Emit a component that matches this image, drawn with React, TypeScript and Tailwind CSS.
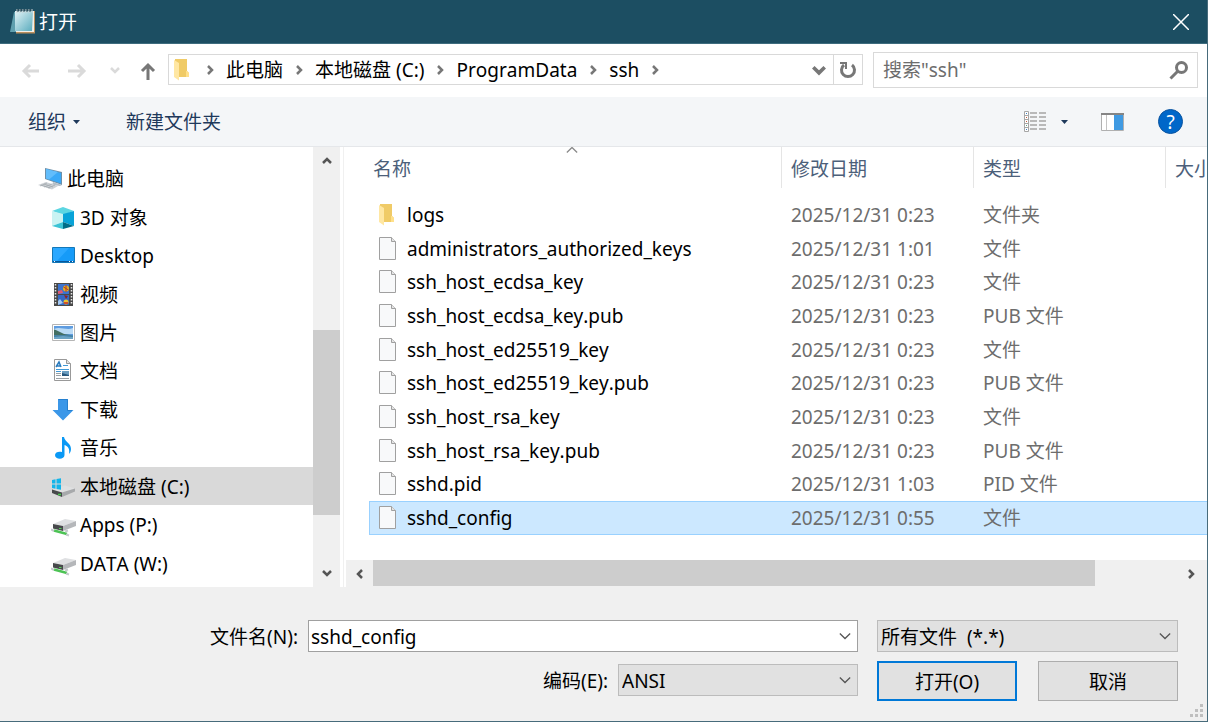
import React, { useState } from 'react';

interface FileEntry {
  name: string;
  modified: string;
  kind: string;
  folder?: boolean;
}

interface Place {
  name: string;
  icon: React.ReactNode;
  root?: boolean;
}

const FILES: FileEntry[] = [
  { name: 'logs', modified: '2025/12/31 0:23', kind: '文件夹', folder: true },
  { name: 'administrators_authorized_keys', modified: '2025/12/31 1:01', kind: '文件' },
  { name: 'ssh_host_ecdsa_key', modified: '2025/12/31 0:23', kind: '文件' },
  { name: 'ssh_host_ecdsa_key.pub', modified: '2025/12/31 0:23', kind: 'PUB 文件' },
  { name: 'ssh_host_ed25519_key', modified: '2025/12/31 0:23', kind: '文件' },
  { name: 'ssh_host_ed25519_key.pub', modified: '2025/12/31 0:23', kind: 'PUB 文件' },
  { name: 'ssh_host_rsa_key', modified: '2025/12/31 0:23', kind: '文件' },
  { name: 'ssh_host_rsa_key.pub', modified: '2025/12/31 0:23', kind: 'PUB 文件' },
  { name: 'sshd.pid', modified: '2025/12/31 1:03', kind: 'PID 文件' },
  { name: 'sshd_config', modified: '2025/12/31 0:55', kind: '文件' },
];

const CRUMBS = ['此电脑', '本地磁盘 (C:)', 'ProgramData', 'ssh'];

const NotepadIcon = () => (
  <svg width="26" height="28" viewBox="0 0 26 28">
    <defs>
      <linearGradient id="pad" x1="0" y1="0" x2="1" y2="1">
        <stop offset="0" stopColor="#e4f4f7" />
        <stop offset="1" stopColor="#58abbd" />
      </linearGradient>
    </defs>
    <path d="M4 4 0 24h7V4z" fill="#5f9fae" />
    <path d="M6 24h17.500V3H25v22.500H6z" fill="#b98e5c" />
    <path d="M22 3h2v21H6v-2h16z" fill="#f2efe8" />
    <path d="M5 3h18l-1 20H5z" fill="url(#pad)" />
    <path d="M7 1v4M10 1v4M13 1v4M16 1v4M19 1v4M22 1v4" stroke="#c9d2d5" />
    <path d="M8 1v3M11 1v3M14 1v3M17 1v3M20 1v3" stroke="#38535d" />
  </svg>
);

const FolderIcon = () => (
  <svg width="16" height="22" viewBox="0 0 16 22">
    <path d="M1 0h12v12l2 2v4H1z" fill="#f0cb67" />
    <path d="M12 12h1l2 2v4h-3z" fill="#ffe08a" />
    <path d="M0 1 5 4v17.500L0 18z" fill="#ffe7a3" />
  </svg>
);

const FileIcon = () => (
  <svg width="18" height="24" viewBox="0 0 18 24">
    <path d="M.5.5h12l4 4v18H.5z" fill="#f8f9fa" stroke="#a0a0a0" />
    <path d="M12.500.5v4h4" fill="#e4e4e4" stroke="#a0a0a0" />
  </svg>
);

const ComputerIcon = () => (
  <svg width="26" height="24" viewBox="0 0 26 24">
    <path d="m7 1 17 4v13L7 12z" fill="#6d8fa8" />
    <path d="m8 2 15 4v10.500L8 11.500z" fill="#3ba9f7" />
    <path d="m8 2 12 3-9 7.500-3-1z" fill="#62bdfb" />
    <path d="m15 15-1 3 8 1 2-1z" fill="#b5bec6" />
    <path d="m0 18 8-3 12 4-6 3.500z" fill="#cdd1d5" />
    <path d="m3 18 9 3M6 17l9 3M2 19l7-3M6 20l8-3M10 21l7-3" stroke="#a1a8ae" strokeWidth=".7" />
  </svg>
);

const CubeIcon = () => (
  <svg width="24" height="24" viewBox="0 0 24 24">
    <path d="m12 1 11 4-11 4L1 5z" fill="#5cd6e2" />
    <path d="M1 5 12 8v8L1 20z" fill="#c9f3f3" />
    <path d="M23 5 12 8v8l11 4z" fill="#08a3d8" />
    <path d="M1 20l11-4v7z" fill="#3cc3d5" />
    <path d="M23 20l-11-4v7z" fill="#006d88" />
  </svg>
);

const DesktopIcon = () => (
  <svg width="24" height="24" viewBox="0 0 24 24">
    <path d="M1.500 3.500h22v15h-22z" fill="#169bf8" stroke="#1478b8" />
    <path d="M2 4h16L6 17H2z" fill="#2ba8ff" />
    <path d="M2 17.500h21" stroke="#08579b" />
    <path d="M3 17.500h1M18 17.500h1M21 17.500h1" stroke="#fff" />
  </svg>
);

const VideoIcon = () => (
  <svg width="24" height="24" viewBox="0 0 24 24">
    <path d="M3 0h19v23H3z" fill="#484848" />
    <path d="M7 1h11v10H7z" fill="#3d74ce" />
    <path d="M7 12h11v10H7z" fill="#3568c4" />
    <path d="M4.500 1v21M20.500 1v21" stroke="#e6e6e6" strokeWidth="1.500" strokeDasharray="1.500 1.500" />
    <path d="M7 8l4-1 1 3-5 1z" fill="#e05a73" />
    <circle cx="15" cy="5.500" r="3" fill="#e2b022" />
    <path d="M15 2v7M12.500 4l5 3" stroke="#b8372a" />
    <path d="m13 12 2 4 2-3z" fill="#8d2323" />
    <circle cx="15" cy="19" r="2.500" fill="#efc32c" />
    <path d="M13 19h4v2h-4z" fill="#d0502c" />
    <path d="M7 18l2-2 3 4-5 2z" fill="#a6c9ef" />
  </svg>
);

const PictureIcon = () => (
  <svg width="24" height="24" viewBox="0 0 24 24">
    <path d="M1.500 3.500h22v16h-22z" fill="#fff" stroke="#b5b5b5" />
    <path d="M3 5h19v13H3z" fill="#5e9ce0" />
    <path d="M3 8c6-3 13 2 19-1v6H3z" fill="#b9daf5" />
    <path d="M3 8.500c5 1 8 4.500 13 5l6 1H3z" fill="#436f63" />
    <path d="M3 14.500h19V18H3z" fill="#3f7fa5" />
    <path d="m3 16 9-1 10 1v2H3z" fill="#6ba3c4" />
  </svg>
);

const DocumentIcon = () => (
  <svg width="24" height="24" viewBox="0 0 24 24">
    <path d="M3.500.5h12l4 4v17h-16z" fill="#fff" stroke="#999" />
    <path d="M15.500.5v4h4" fill="#e2e2e2" stroke="#999" />
    <path d="m5 8 3-5 2 5M6 7h3" stroke="#2a7bbd" strokeWidth="1.500" fill="none" />
    <path d="M12 6.500h5M5 10.500h13M5 12.500h5" stroke="#4099d7" />
    <path d="M11 12h7v5h-7z" fill="#6a9dc0" />
    <path d="m11 14 7 2v1h-7z" fill="#28577d" />
    <path d="M5 14.500h5M5 16.500h5M5 19.500h13" stroke="#9aa0a5" />
  </svg>
);

const DownloadIcon = () => (
  <svg width="24" height="24" viewBox="0 0 24 24">
    <path d="M7 1h10v11h5.500L12 22.500 1.500 12H7z" fill="#3b97e8" />
    <path d="M7.500 1.500h9v11h4.500" fill="none" stroke="#2680cf" />
  </svg>
);

const MusicIcon = () => (
  <svg width="24" height="24" viewBox="0 0 24 24">
    <path
      d="M11 1h2c1 5 7 6 7 12 0 2-1 4-2 5 1-5-1-8-4.500-9v10c0 5-9.500 5-9.500 0 0-3 4-4 7-3z"
      fill="#0a99f5"
    />
  </svg>
);

const SystemDriveIcon = () => (
  <svg width="24" height="24" viewBox="0 0 24 24">
    <path d="m1 14.500 13-4 10 3-13 4z" fill="#dfe0e1" />
    <path d="m1 14.500 10 3V22L1 18z" fill="#47494b" />
    <path d="m11 17.500 13-4v3L11 22z" fill="#a7a9ab" />
    <path d="M7 19.500h3" stroke="#49d14c" strokeWidth="1.500" />
    <path d="m1 5 3.500-.7v4.200H1zM5.500 4l4.500-.8v5.300H5.500zM1 9.500h3.500v4.200L1 13zM5.500 9.500H10v5.300L5.500 14z" fill="#13b5ea" />
  </svg>
);

const NetworkDriveIcon = () => (
  <svg width="26" height="24" viewBox="0 0 26 24">
    <path d="m2 11 12-5 11 2-13 5z" fill="#dfe0e2" />
    <path d="m2 11 10 2v5L2 15.500z" fill="#47494b" />
    <path d="m12 13 13-5v5l-13 5z" fill="#b5b7ba" />
    <path d="M8 15.500h2.500" stroke="#55d158" />
    <path d="m3 17.500 13 3.500" fill="none" stroke="#4cc354" strokeWidth="2.500" />
    <path d="m0 16.500 3 1.500M15 21.500l3 1M14 18.500l3-1" stroke="#c5c9cc" strokeWidth="2" />
  </svg>
);

const PLACES: Place[] = [
  { name: '此电脑', icon: <ComputerIcon />, root: true },
  { name: '3D 对象', icon: <CubeIcon /> },
  { name: 'Desktop', icon: <DesktopIcon /> },
  { name: '视频', icon: <VideoIcon /> },
  { name: '图片', icon: <PictureIcon /> },
  { name: '文档', icon: <DocumentIcon /> },
  { name: '下载', icon: <DownloadIcon /> },
  { name: '音乐', icon: <MusicIcon /> },
  { name: '本地磁盘 (C:)', icon: <SystemDriveIcon /> },
  { name: 'Apps (P:)', icon: <NetworkDriveIcon /> },
  { name: 'DATA (W:)', icon: <NetworkDriveIcon /> },
];

const CHEVRONS = {
  up: 'm3 9 4-4 4 4',
  down: 'm3 5 4 4 4-4',
  left: 'm9 3-4 4 4 4',
  right: 'm5 3 4 4-4 4',
};

interface ChevronProps {
  dir: keyof typeof CHEVRONS;
  size?: number;
  weight?: number;
}

const Chevron: React.FC<ChevronProps> = ({ dir, size = 14, weight = 2.5 }) => (
  <svg width={size} height={size} viewBox="0 0 14 14" fill="none" stroke="currentColor" strokeWidth={weight}>
    <path d={CHEVRONS[dir]} />
  </svg>
);

const NavArrow: React.FC<{ d: string }> = ({ d }) => (
  <svg width="20" height="20" viewBox="0 0 20 20" fill="none" stroke="currentColor" strokeWidth="3">
    <path d={d} />
  </svg>
);

const ViewIcon = () => (
  <svg width="24" height="22" viewBox="0 0 24 22">
    <path d="M1.500.5h4v20h-4zM1.500 4.500h4M1.500 8.500h4M1.500 12.500h4M1.500 16.500h4" fill="#fff" stroke="#a6a6a6" />
    <path d="M7 2h7M16 2h7M7 6h7M16 6h7M7 10h7M16 10h7M7 14h7M16 14h7M7 18h7M16 18h7" stroke="#b9b9b9" strokeWidth="2" />
    <path d="M3 2.500h1M3 18.500h1" stroke="#3d7fc4" />
    <path d="M3 6.500h1M3 10.500h1" stroke="#c65a3a" />
    <path d="M3 14.500h1" stroke="#5b9e80" />
  </svg>
);

const PreviewPaneIcon = () => (
  <svg width="24" height="18" viewBox="0 0 24 18">
    <path d="M.5.5h22v17H.5z" fill="#fff" stroke="#b0b0b0" />
    <path d="M0 1h23" stroke="#858585" strokeWidth="2" />
    <path d="M5.500 2v15" stroke="#c4c4c4" />
    <path d="M13 2h9v15h-9z" fill="#409ae2" />
  </svg>
);

const Caret = () => (
  <svg width="7" height="4" viewBox="0 0 7 4">
    <path d="M0 0h7L3.500 4z" fill="#1e395b" />
  </svg>
);

interface ComboProps {
  id: string;
  label?: string;
  options: string[];
  className?: string;
}

const Combo: React.FC<ComboProps> = ({ id, label, options, className = '' }) => (
  <div className={`relative h-8 ${className}`}>
    <select
      id={id}
      aria-label={label}
      className="block h-full w-full appearance-none border border-[#bcbcbc] bg-[#e1e1e1] pt-[2px] pr-8 pl-[3px] leading-7 text-black outline-none"
    >
      {options.map((option) => (
        <option key={option}>{option}</option>
      ))}
    </select>
    <span className="pointer-events-none absolute inset-y-0 right-[4px] flex items-center text-[#555]">
      <Chevron dir="down" size={18} weight={1} />
    </span>
  </div>
);

const App: React.FC = () => {
  const [place, setPlace] = useState('本地磁盘 (C:)');
  const [fileName, setFileName] = useState('sshd_config');

  return (
    <div className="flex min-h-screen flex-col border-r border-b border-[#476b7b] bg-[#f0f0f0] font-['Noto_Sans','Noto_Sans_CJK_SC',sans-serif] text-[19px] leading-6 text-black [font-kerning:none]">
      <header className="flex h-11 items-center border-b border-[#3e6c7e] bg-[#1c4e62] pl-[10px] text-white">
        <NotepadIcon />
        <h1 className="ml-[3px] flex-1">打开</h1>
        <button type="button" aria-label="关闭" className="flex h-full w-13 items-center justify-center">
          <svg width="16" height="16" viewBox="0 0 16 16" stroke="currentColor" strokeWidth="1.500">
            <path d="m0 0 16 16M16 0 0 16" />
          </svg>
        </button>
      </header>

      <nav className="flex h-[53px] items-center bg-white pr-[9px] pb-[2px] pl-5">
        <button type="button" aria-label="后退" className="text-[#dadada]">
          <NavArrow d="M19 11H4M10 5l-6 6 6 6" />
        </button>
        <button type="button" aria-label="前进" className="ml-[27px] text-[#dadada]">
          <NavArrow d="M1 11h16M11 5l6 6-6 6" />
        </button>
        <button type="button" aria-label="最近浏览的位置" className="ml-[21px] text-[#dadada]">
          <Chevron dir="down" />
        </button>
        <button type="button" aria-label="上移" className="ml-4 text-[#777]">
          <NavArrow d="M10 20V5M4 11l6-6 6 6" />
        </button>

        <div className="ml-[10px] flex h-[31px] flex-1 items-center border border-[#d9d9d9]">
          <span className="mr-1 ml-[5px]">
            <FolderIcon />
          </span>
          {CRUMBS.map((crumb) => (
            <span key={crumb} className="flex items-center">
              <span className="mx-[9px] text-[#777]">
                <Chevron dir="right" />
              </span>
              <button type="button" className="pt-px">
                {crumb}
              </button>
            </span>
          ))}
          <span className="mx-[9px] text-[#777]">
            <Chevron dir="right" />
          </span>
          <button type="button" aria-label="以前的位置" className="ml-auto flex h-full w-7 items-center justify-center text-[#777]">
            <Chevron dir="down" size={20} />
          </button>
          <button
            type="button"
            aria-label="刷新"
            className="flex h-full w-[29px] items-center justify-center border-l border-[#d9d9d9] text-[#777]"
          >
            <svg width="18" height="18" viewBox="0 0 18 18" fill="none" stroke="currentColor" strokeWidth="3">
              <path d="M13 4a6.500 6.500 0 1 1-8 0" />
              <path d="M1 2h6v6" strokeWidth="2" />
            </svg>
          </button>
        </div>

        <div className="ml-[10px] flex h-9 w-[325px] items-center border border-[#d9d9d9] px-2">
          <input
            type="search"
            aria-label="搜索"
            placeholder={'搜索"ssh"'}
            className="min-w-0 flex-1 pt-px pl-px outline-none placeholder:text-[#6d6d6d]"
          />
          <svg width="20" height="20" viewBox="0 0 20 20" fill="none" stroke="#777" strokeWidth="3">
            <circle cx="12.500" cy="7.500" r="5" />
            <path d="m9 11-7.500 7.500" />
          </svg>
        </div>
      </nav>

      <div className="flex h-[50px] items-center border-b border-[#e5e7ea] bg-[#f4f6f8] pr-6 pl-7 text-[#1e395b]">
        <button type="button" className="flex items-center gap-[7px]">
          组织
          <Caret />
        </button>
        <button type="button" className="ml-[46px]">
          新建文件夹
        </button>
        <button type="button" aria-label="更改视图" className="ml-auto flex items-center gap-[14px]">
          <ViewIcon />
          <Caret />
        </button>
        <button type="button" aria-label="预览窗格" className="ml-[33px]">
          <PreviewPaneIcon />
        </button>
        <button
          type="button"
          aria-label="帮助"
          className="ml-[33px] flex size-[25px] items-center justify-center rounded-full border border-[#0a54a0] bg-[#0067c9] text-white"
        >
          ?
        </button>
      </div>

      <main className="flex h-[440px] bg-white">
        <aside className="flex w-[340px] shrink-0">
          <ul className="flex flex-1 flex-col pt-3 pb-[5px]">
            {PLACES.map((p) => (
              <li key={p.name} className="flex-1">
                <button
                  type="button"
                  onClick={() => setPlace(p.name)}
                  className={`flex h-full w-full items-center pt-[2px] text-left ${
                    p.root ? 'gap-[3px] pl-[38px]' : 'pl-[51px]'
                  } ${p.name === place ? 'bg-[#d9d9d9]' : ''}`}
                >
                  <span className={p.root ? '' : 'w-[29px]'}>{p.icon}</span>
                  {p.name}
                </button>
              </li>
            ))}
          </ul>
          <div className="flex w-[27px] flex-col items-center bg-[#f0f0f0] text-[#555]">
            <button type="button" aria-label="向上滚动" className="flex h-7 items-center">
              <Chevron dir="up" />
            </button>
            <div className="mt-[155px] h-[185px] w-full bg-[#cdcdcd]" />
            <button type="button" aria-label="向下滚动" className="mt-auto flex h-7 items-center">
              <Chevron dir="down" />
            </button>
          </div>
        </aside>

        <section className="ml-[3px] flex min-w-0 flex-1 flex-col border-l border-[#f0f0f0]">
          <div className="min-h-0 flex-1 overflow-hidden pl-[25px]">
            <table className="h-[388px] w-[989px] table-fixed border-separate border-spacing-0">
              <colgroup>
                <col className="w-[413px]" />
                <col className="w-[192px]" />
                <col className="w-[192px]" />
                <col className="w-[192px]" />
              </colgroup>
              <thead className="text-left text-[#4c607a]">
                <tr className="h-[51px]">
                  <th className="relative p-0 pb-[10px] font-normal">
                    <div className="flex h-[41px] items-center border-r border-[#e5e5e5] pt-[2px] pl-1">名称</div>
                    <span className="absolute top-[-6px] left-[194px] text-[#8a8a8a]">
                      <Chevron dir="up" size={18} weight={1} />
                    </span>
                  </th>
                  <th className="p-0 pb-[10px] font-normal">
                    <div className="flex h-[41px] items-center border-r border-[#e5e5e5] pt-[2px] pl-[9px]">修改日期</div>
                  </th>
                  <th className="p-0 pb-[10px] font-normal">
                    <div className="flex h-[41px] items-center border-r border-[#e5e5e5] pt-[2px] pl-[9px]">类型</div>
                  </th>
                  <th className="p-0 pb-[10px] font-normal">
                    <div className="flex h-[41px] items-center pt-[2px] pl-[9px]">大小</div>
                  </th>
                </tr>
              </thead>
              <tbody className="text-[#6d6d6d]">
                {FILES.map((file) => {
                  const selected = file.name === fileName;
                  const cell = selected ? 'border-[#99d1ff] bg-[#cce8ff]' : 'border-transparent';
                  return (
                    <tr key={file.name} onClick={() => setFileName(file.name)}>
                      <td className={`border-y border-l p-0 pl-[9px] text-black ${cell}`}>
                        <div className="flex items-center">
                          <span className="w-[28px]">{file.folder ? <FolderIcon /> : <FileIcon />}</span>
                          {file.name}
                        </div>
                      </td>
                      <td className={`border-y p-0 pl-[9px] ${cell}`}>{file.modified}</td>
                      <td className={`border-y p-0 pl-[9px] ${cell}`}>{file.kind}</td>
                      <td className={`border-y p-0 ${cell}`} />
                    </tr>
                  );
                })}
              </tbody>
            </table>
          </div>
          <div className="ml-[2px] flex h-[27px] items-center bg-[#f0f0f0] text-[#555]">
            <button type="button" aria-label="向左滚动" className="flex w-[27px] justify-center">
              <Chevron dir="left" />
            </button>
            <div className="flex h-full flex-1">
              <div className="h-[26px] w-9/10 bg-[#cdcdcd]" />
            </div>
            <button type="button" aria-label="向右滚动" className="flex w-8 justify-center">
              <Chevron dir="right" />
            </button>
          </div>
        </section>
      </main>

      <footer className="relative flex flex-1 gap-[19px] pt-[33px] pr-[29px]">
        <div className="flex-1">
          <div className="flex items-center">
            <label htmlFor="fileName" className="w-[298px] pt-[2px] text-right">
              文件名(N):
            </label>
            <div className="ml-[10px] flex h-8 flex-1 items-center border border-[#a0a0a0] bg-white">
              <input
                id="fileName"
                type="text"
                value={fileName}
                onChange={(e) => setFileName(e.target.value)}
                className="min-w-0 flex-1 pt-[2px] pl-[2px] outline-none"
              />
              <button type="button" aria-label="显示历史记录" className="mr-[3px] text-[#555]">
                <Chevron dir="down" size={18} weight={1} />
              </button>
            </div>
          </div>
          <div className="mt-3 flex items-center justify-end">
            <label htmlFor="encoding" className="pt-[2px]">
              编码(E):
            </label>
            <Combo id="encoding" className="ml-[10px] w-60" options={['ANSI', 'UTF-16 LE', 'UTF-16 BE', 'UTF-8']} />
          </div>
        </div>
        <div className="w-[301px]">
          <Combo id="fileType" label="文件类型" options={['所有文件\u00a0 (*.*)', '文本文档(*.txt)']} />
          <div className="mt-[9px] grid grid-cols-2 gap-[21px]">
            <button type="button" className="h-10 border-2 border-[#0078d7] bg-[#e1e1e1] pt-px">
              打开(O)
            </button>
            <button type="button" className="h-10 border border-[#adadad] bg-[#e1e1e1] pt-px">
              取消
            </button>
          </div>
        </div>
        <svg className="absolute right-[3px] bottom-[3px]" width="14" height="14" viewBox="0 0 14 14" fill="#bfbfbf">
          <path d="M10 0h3v3h-3zM5 5h3v3H5zM10 5h3v3h-3zM0 10h3v3H0zM5 10h3v3H5zM10 10h3v3h-3z" />
        </svg>
      </footer>
    </div>
  );
};

export default App;
